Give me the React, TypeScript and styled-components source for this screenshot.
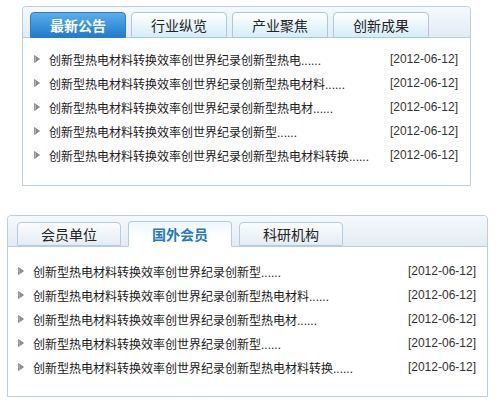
import React, { useState } from 'react';
import styled, { createGlobalStyle, css } from 'styled-components';

const GlobalStyle = createGlobalStyle`
  html, body {
    margin: 0;
    padding: 0;
    background: #fff;
  }
  body {
    font-family: "Liberation Sans", "Noto Sans CJK SC", sans-serif;
    font-size: 12px;
    color: #222;
  }
`;

const Page = styled.div`
  display: flex;
  flex-direction: column;
  gap: 29px;
  padding-top: 6px;
`;

const Panel = styled.section<{ $left: number; $width: number }>`
  margin-left: ${(p) => p.$left}px;
  width: ${(p) => p.$width}px;
  border: 1px solid #b9cee0;
  border-radius: 4px 4px 0 0;
  background: #fff;
  box-sizing: border-box;
`;

const TabBar = styled.div<{ $inset: number; $gap: number }>`
  display: flex;
  align-items: flex-end;
  gap: ${(p) => p.$gap}px;
  height: 30px;
  padding-left: ${(p) => p.$inset}px;
  background: linear-gradient(#f6f9fc, #e3ebf3);
  border-bottom: 1px solid #b9cee0;
  border-radius: 4px 4px 0 0;
`;

type TabKind = 'blue' | 'plain';

const Tab = styled.button<{ $kind: TabKind; $active: boolean; $width: number }>`
  width: ${(p) => p.$width}px;
  height: 26px;
  margin-bottom: -1px;
  padding: 0;
  border: 1px solid #b4cbdd;
  border-radius: 4px 4px 0 0;
  font-family: "Noto Sans CJK SC", "Liberation Sans", sans-serif;
  font-size: 14px;
  line-height: 24px;
  color: #222;
  cursor: pointer;
  box-sizing: border-box;

  ${(p) =>
    p.$kind === 'blue'
      ? p.$active
        ? css`
            background: linear-gradient(#5aaeea, #1f7ccc);
            border-color: #2b7dc4;
            color: #fff;
            font-weight: bold;
          `
        : css`
            background: linear-gradient(#ffffff, #d3edf7);
            border-color: #a9c9dc;
          `
      : p.$active
        ? css`
            height: 26px;
            background: linear-gradient(#eef7fd, #ffffff 60%);
            border-bottom-color: #fff;
            color: #1f7ac6;
            font-weight: bold;
          `
        : css`
            height: 24px;
            margin-bottom: 0;
            line-height: 22px;
            background: linear-gradient(#fbfcfd, #e4ecf3);
          `}
`;

const List = styled.ul<{ $pad: number; $top: number; $bottom: number }>`
  list-style: none;
  margin: 0;
  padding: ${(p) => `${p.$top}px ${p.$pad + 1}px ${p.$bottom}px ${p.$pad}px`};
`;

const Row = styled.li`
  display: flex;
  align-items: center;
  height: 24px;
`;

const Bullet = styled.svg`
  flex: none;
  width: 6px;
  height: 8px;
  margin-right: 9px;
`;

const Title = styled.a`
  flex: 1;
  color: #1a1a1a;
  text-decoration: none;
  font-family: "Noto Sans CJK SC", "Liberation Sans", sans-serif;
  font-size: 12px;
  white-space: nowrap;
  overflow: hidden;
`;

const Dots = styled.span`
  font-family: "Liberation Sans", sans-serif;
`;

const DateText = styled.span`
  flex: none;
  font-family: "Liberation Sans", sans-serif;
  font-size: 12px;
  color: #333;
`;

const base = '创新型热电材料转换效率创世界纪录';
const topItems = [
  base + '创新型热电',
  base + '创新型热电材料',
  base + '创新型热电材',
  base + '创新型',
  base + '创新型热电材料转换',
];
const bottomItems = [
  base + '创新型',
  base + '创新型热电材料',
  base + '创新型热电材',
  base + '创新型',
  base + '创新型热电材料转换',
];

const Arrow = () => (
  <Bullet viewBox="0 0 6 8">
    <path d="M0.5 0.5 L5.5 4 L0.5 7.5 Z" fill="#8a8a8a" stroke="#6d6d6d" strokeWidth="0.6" />
    <path d="M1.3 1.8 L1.3 6.2" stroke="#c8c8c8" strokeWidth="0.8" />
  </Bullet>
);

interface NewsBoxProps {
  left: number;
  width: number;
  kind: TabKind;
  tabs: string[];
  tabWidth: number;
  inset: number;
  gap: number;
  initial: number;
  items: string[];
  pad: number;
  top: number;
  bottom: number;
}

const NewsBox: React.FC<NewsBoxProps> = ({ left, width, kind, tabs, tabWidth, inset, gap, initial, items, pad, top, bottom }) => {
  const [current, setCurrent] = useState(initial);
  return (
    <Panel $left={left} $width={width}>
      <TabBar $inset={inset} $gap={gap}>
        {tabs.map((t, i) => (
          <Tab key={t} $kind={kind} $active={i === current} $width={tabWidth} onClick={() => setCurrent(i)}>
            {t}
          </Tab>
        ))}
      </TabBar>
      <List $pad={pad} $top={top} $bottom={bottom}>
        {items.map((item, i) => (
          <Row key={i}>
            <Arrow />
            <Title href="#">
              {item}
              <Dots>......</Dots>
            </Title>
            <DateText>[2012-06-12]</DateText>
          </Row>
        ))}
      </List>
    </Panel>
  );
};

export default function App() {
  return (
    <>
      <GlobalStyle />
      <Page>
        <NewsBox
          left={22}
          width={449}
          kind="blue"
          tabs={['最新公告', '行业纵览', '产业聚焦', '创新成果']}
          tabWidth={96}
          inset={7}
          gap={5}
          initial={0}
          items={topItems}
          pad={11}
          top={9}
          bottom={18}
        />
        <NewsBox
          left={7}
          width={481}
          kind="plain"
          tabs={['会员单位', '国外会员', '科研机构']}
          tabWidth={104}
          inset={9}
          gap={7}
          initial={1}
          items={bottomItems}
          pad={10}
          top={12}
          bottom={17}
        />
      </Page>
    </>
  );
}
